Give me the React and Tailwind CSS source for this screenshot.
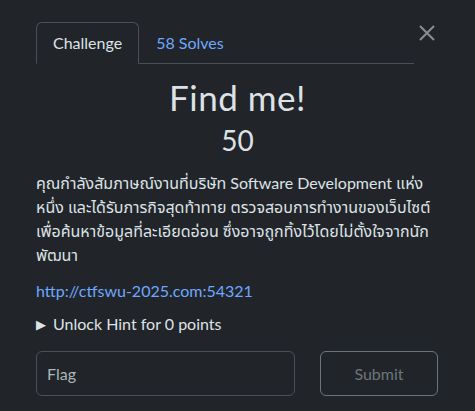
export default function App() {
  return (
    <div className="min-h-screen w-full bg-[#212529] px-[36px] pt-[22px] font-['Lato','Noto_Sans',sans-serif] text-[#dee2e6]">
      <div className="flex items-start">
        <ul className="flex flex-1 border-b border-[#495057]">
          <li className="-mb-px rounded-t-md border border-[#495057] border-b-[#212529] bg-[#212529] px-4 py-2 text-base leading-6 text-[#dee2e6]">
            Challenge
          </li>
          <li className="-mb-px border border-transparent px-4 py-2 text-base leading-6 text-[#6ea8fe]">
            58 Solves
          </li>
        </ul>
        <button className="mt-[3px] flex h-[16px] w-[25px] items-center justify-center">
          <svg width="16" height="16" viewBox="0 0 16 16">
            <path d="M1 1 L15 15 M15 1 L1 15" stroke="#8b8e91" strokeWidth="2" />
          </svg>
        </button>
      </div>

      <div className="mt-[12px] text-center text-[35px] leading-[42px] tracking-[0.5px]">Find me!</div>
      <div className="mt-[5px] text-center text-[28px] leading-[34px]">50</div>

      <p className="mt-[14px] text-base leading-6 font-['Lato','Noto_Sans_Thai','Noto_Sans',sans-serif]">
        คุณกำลังสัมภาษณ์งานที่บริษัท Software Development แห่งหนึ่ง และได้รับภารกิจสุดท้าทาย ตรวจสอบการทำงานของเว็บไซต์เพื่อค้นหาข้อมูลที่ละเอียดอ่อน ซึ่งอาจถูกทิ้งไว้โดยไม่ตั้งใจจากนักพัฒนา
      </p>

      <a className="mt-[12px] block text-base leading-6 text-[#6ea8fe]">http://ctfswu-2025.com:54321</a>

      <div className="mt-[9px] flex items-center text-base leading-6">
        <span className="mr-[8px] w-[9px] text-[13px] leading-none">▶</span>
        <span>Unlock Hint for 0 points</span>
      </div>

      <div className="mt-[15px] flex gap-[25px]">
        <div className="flex h-[45px] w-[259px] items-center rounded-md border border-[#495057] px-[10px] text-base text-[#adb5bd]">
          Flag
        </div>
        <button className="flex h-[45px] w-[118px] items-center justify-center rounded-md border border-[#6c757d] text-base text-[#6c757d]">
          Submit
        </button>
      </div>
    </div>
  )
}
